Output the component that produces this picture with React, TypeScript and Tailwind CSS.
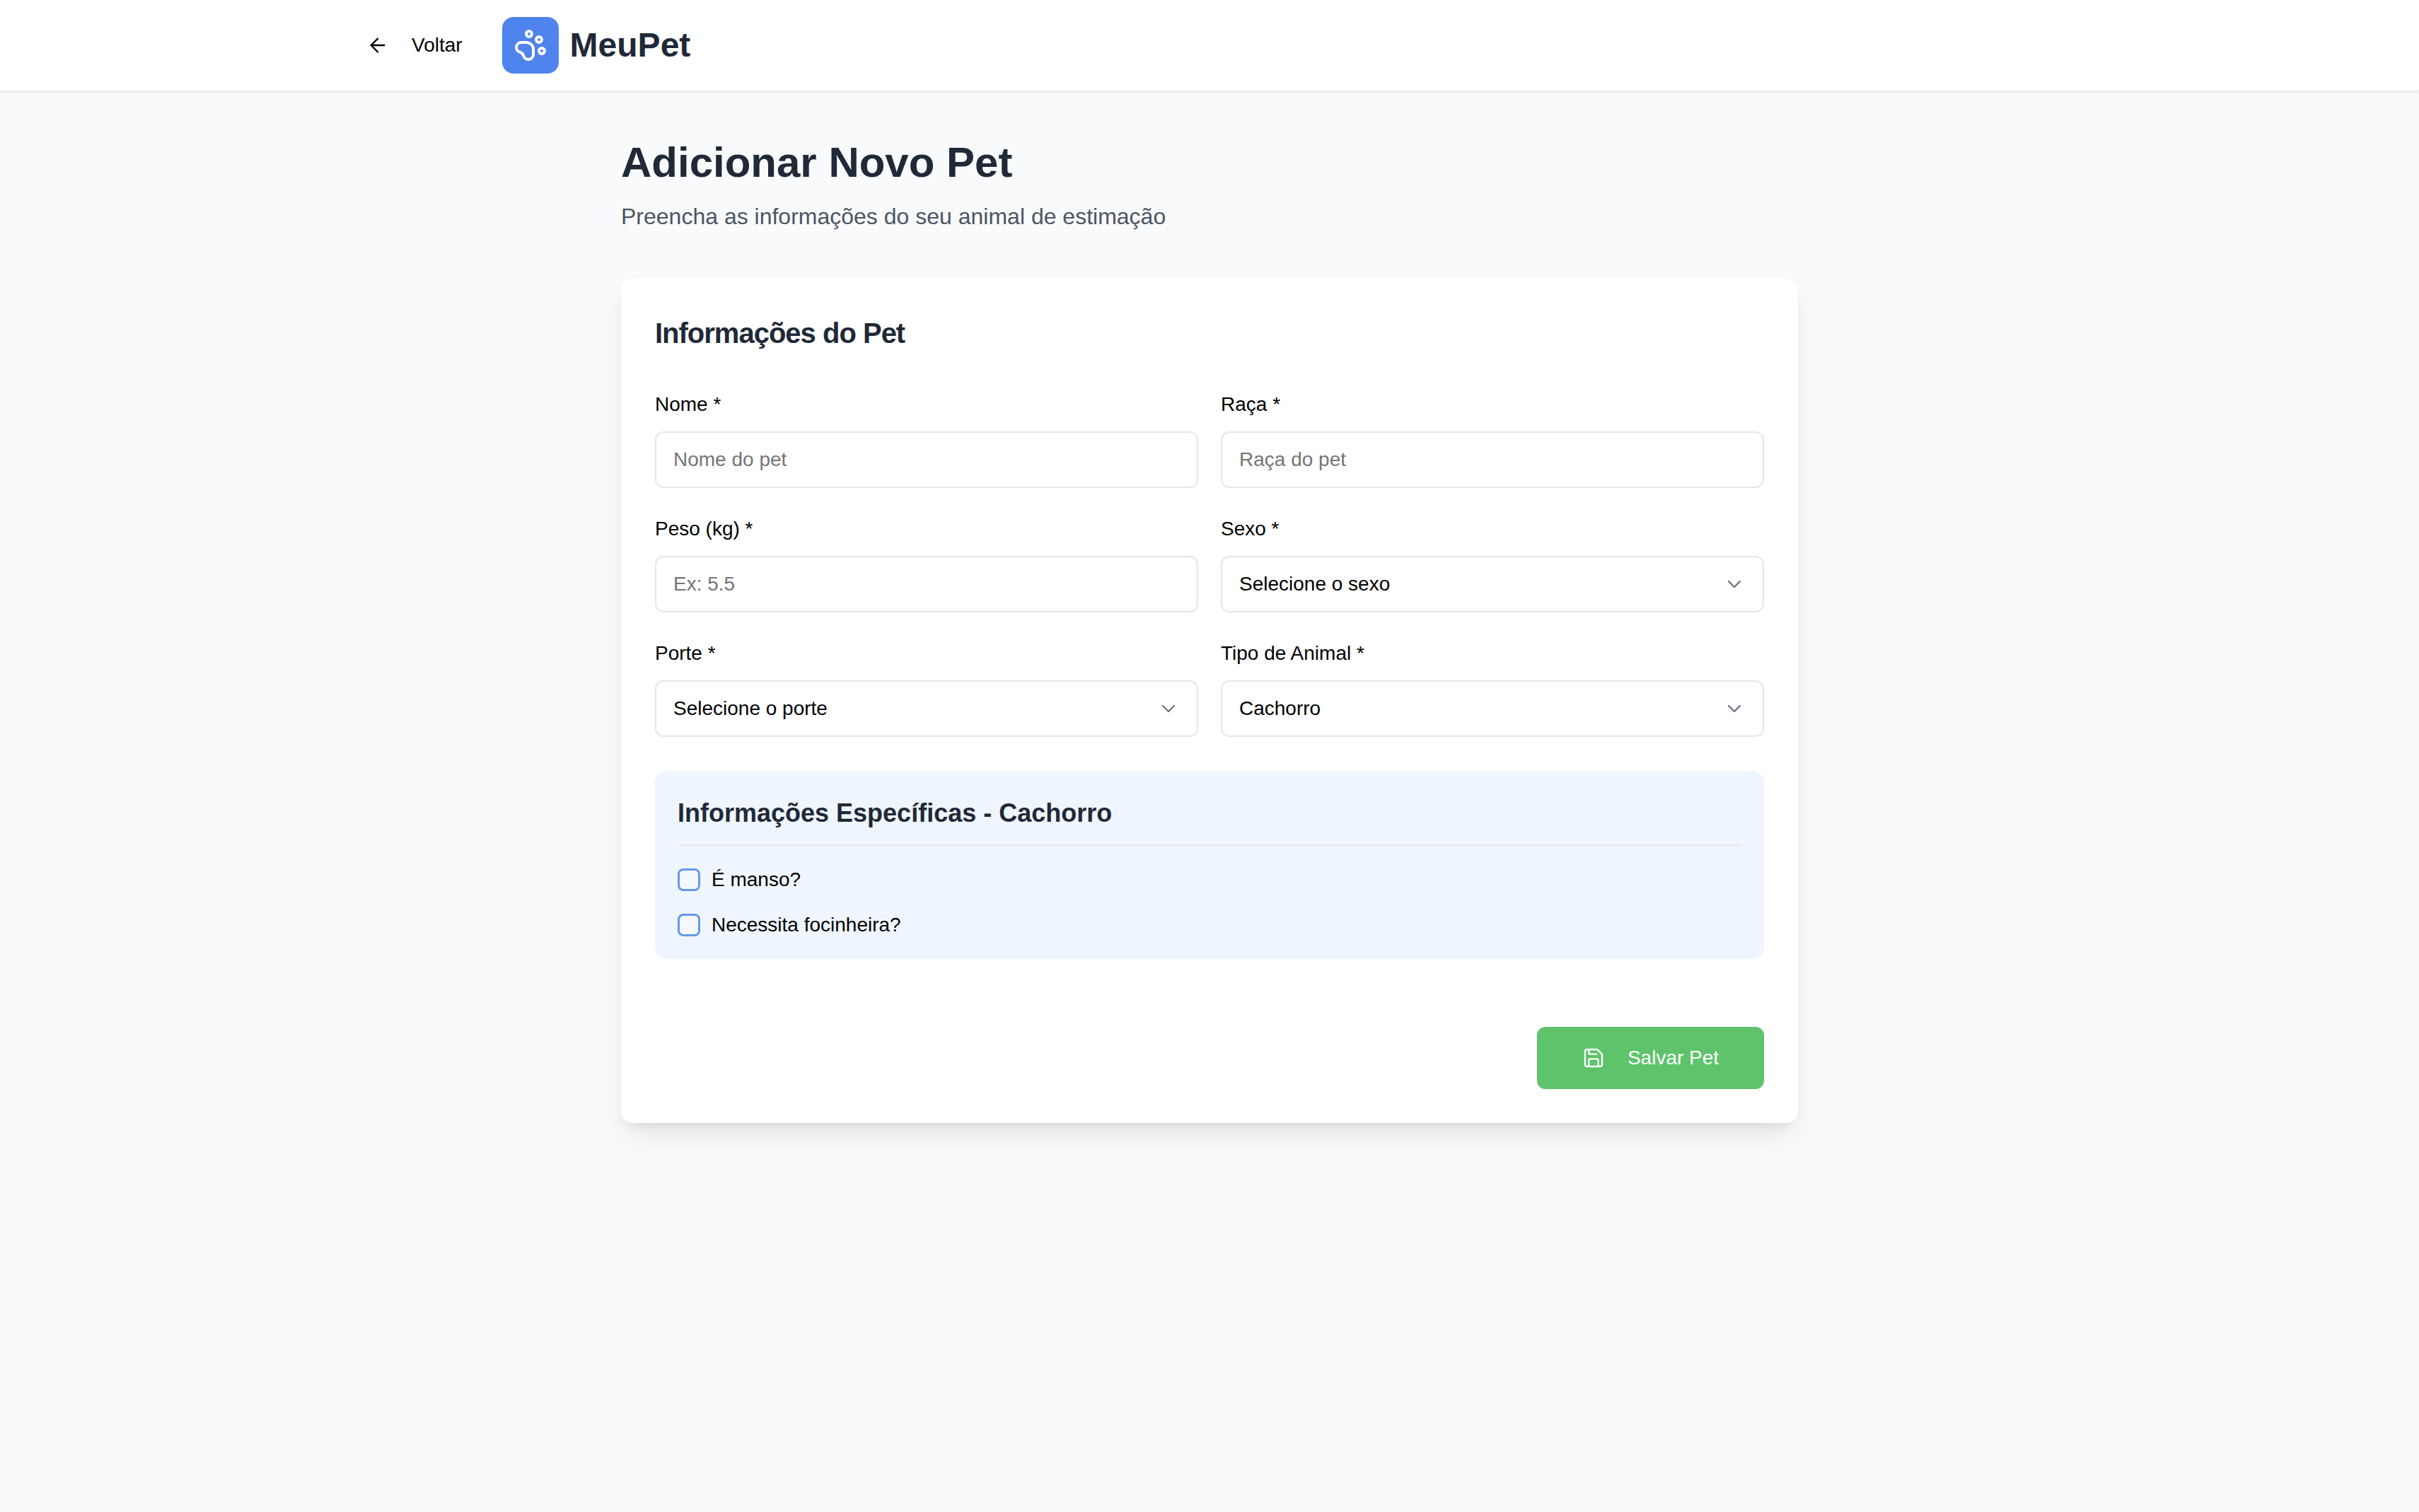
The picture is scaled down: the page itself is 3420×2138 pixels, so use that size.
import { ArrowLeft, ChevronDown, PawPrint, Save } from "lucide-react";

const font = "[font-family:'Liberation_Sans',Arial,sans-serif]";

function Label({ children }: { children: string }) {
  return <label className="mb-[18px] block text-[28px] leading-[40px] text-black">{children}</label>;
}

function TextField({ label, placeholder }: { label: string; placeholder: string }) {
  return (
    <div>
      <Label>{label}</Label>
      <input
        placeholder={placeholder}
        className="block h-[80px] w-full rounded-[12px] border-[2px] border-[#e5e7eb] bg-white px-[24px] text-[28px] text-black outline-none placeholder:text-[#757575]"
      />
    </div>
  );
}

function SelectField({ label, value }: { label: string; value: string }) {
  return (
    <div>
      <Label>{label}</Label>
      <div className="flex h-[80px] w-full items-center justify-between rounded-[12px] border-[2px] border-[#e5e7eb] bg-white px-[24px] text-[28px] text-black">
        <span>{value}</span>
        <ChevronDown className="h-[32px] w-[32px] text-[#6b7280]" strokeWidth={1.75} />
      </div>
    </div>
  );
}

function Check({ label }: { label: string }) {
  return (
    <label className="flex items-center gap-[16px] text-[28px] leading-[32px] text-black">
      <span className="h-[32px] w-[32px] rounded-[8px] border-[3px] border-[#6499e9] bg-white/40" />
      {label}
    </label>
  );
}

export default function App() {
  return (
    <div className={`min-h-[2138px] bg-[#f9fafb] ${font}`}>
      <header className="h-[128px] bg-white shadow-[0_2px_4px_rgba(0,0,0,0.1)]">
        <div className="mx-auto flex h-full w-[2560px] items-center gap-[48px] pl-[80px]">
          <button className="flex h-[80px] items-center gap-[32px] px-[8px] text-[28px] text-black">
            <ArrowLeft className="h-[32px] w-[32px]" strokeWidth={1.75} />
            Voltar
          </button>
          <div className="flex items-center gap-[16px]">
            <div className="flex h-[80px] w-[80px] items-center justify-center rounded-[16px] bg-[#4f83ee]">
              <PawPrint className="h-[48px] w-[48px] text-white" strokeWidth={2} />
            </div>
            <span className="text-[48px] font-bold leading-[56px] text-[#1f2937]">MeuPet</span>
          </div>
        </div>
      </header>
      <main className="mx-auto w-[1664px] pt-[66px]">
        <h1 className="text-[60px] font-bold leading-[72px] text-[#1f2937]">Adicionar Novo Pet</h1>
        <p className="mt-[16px] text-[32px] leading-[48px] text-[#4b5563]">Preencha as informações do seu animal de estimação</p>
        <section className="mt-[64px] rounded-[16px] bg-white p-[48px] shadow-[0_20px_40px_-8px_rgba(0,0,0,0.1),0_8px_16px_-8px_rgba(0,0,0,0.1)]">
          <h2 className="text-[40px] font-bold leading-[58px] tracking-[-1px] text-[#1f2937]">Informações do Pet</h2>
          <div className="mt-[52px] grid grid-cols-2 gap-x-[32px] gap-y-[38px]">
            <TextField label="Nome *" placeholder="Nome do pet" />
            <TextField label="Raça *" placeholder="Raça do pet" />
            <TextField label="Peso (kg) *" placeholder="Ex: 5.5" />
            <SelectField label="Sexo *" value="Selecione o sexo" />
            <SelectField label="Porte *" value="Selecione o porte" />
            <SelectField label="Tipo de Animal *" value="Cachorro" />
          </div>
          <div className="mt-[48px] rounded-[16px] bg-[#eff6ff] p-[32px]">
            <h3 className="border-b-[2px] border-[#e5e7eb] pb-[16px] text-[36px] font-bold leading-[56px] text-[#1f2937]">
              Informações Específicas - Cachorro
            </h3>
            <div className="mt-[32px] flex flex-col gap-[32px]">
              <Check label="É manso?" />
              <Check label="Necessita focinheira?" />
            </div>
          </div>
          <div className="mt-[96px] flex justify-end">
            <button className="flex h-[88px] w-[321px] items-center justify-center gap-[32px] rounded-[12px] bg-[#5fc36c] text-[28px] text-white">
              <Save className="h-[32px] w-[32px]" strokeWidth={1.75} />
              Salvar Pet
            </button>
          </div>
        </section>
      </main>
    </div>
  );
}
